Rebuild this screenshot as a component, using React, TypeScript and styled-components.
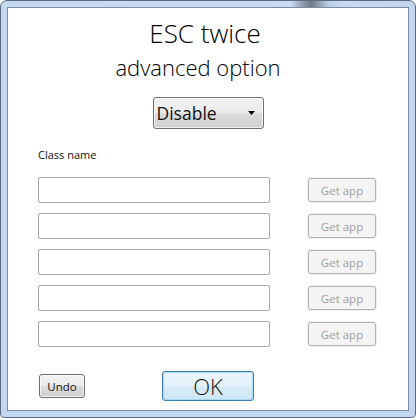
import React from "react";
import styled, { createGlobalStyle } from "styled-components";

const Global = createGlobalStyle`
  html, body { margin: 0; padding: 0; background: #ffffff; }
  body { font-family: "Open Sans", "Noto Sans", sans-serif; }
  * { box-sizing: border-box; }
`;

const Frame = styled.div`
  width: 416px;
  height: 418px;
  border: 1px solid #5a6a7e;
  border-radius: 7px 7px 4px 4px;
  padding: 6px;
  background: linear-gradient(90deg, #c4d8ef 0%, #c9dcf2 70%, #8d99a8 73%, #6f7a88 75%, #b9cbe0 79%, #c6daf1 82%, #c1d6ee 100%) top / 100% 7px no-repeat,
    #c3d8f0;
`;

const Content = styled.div`
  height: 100%;
  border: 1px solid #7d8fa6;
  background: #ffffff;
  display: flex;
  flex-direction: column;
  padding: 0 32px 0 30px;
`;

const Title = styled.div`
  margin-top: 9px;
  padding-right: 4px;
  text-align: center;
  font-size: 26px;
  font-weight: 300;
  line-height: 32px;
  color: #000;
`;

const Subtitle = styled.div`
  margin-top: 3px;
  padding-right: 18px;
  text-align: center;
  font-size: 22px;
  font-weight: 300;
  line-height: 30px;
  color: #000;
`;

const DropWrap = styled.div`
  display: flex;
  justify-content: center;
  padding-left: 2px;
  margin-top: 15px;
`;

const Dropdown = styled.div`
  width: 111px;
  height: 32px;
  border: 1px solid #707070;
  border-radius: 3px;
  background: linear-gradient(#f2f2f2 0%, #ebebeb 48%, #dddddd 52%, #cfcfcf 100%);
  display: flex;
  align-items: center;
  justify-content: space-between;
  padding: 0 7px 0 3px;
  font-size: 17.5px;
  color: #111;
  box-shadow: inset 0 0 0 1px rgba(255, 255, 255, 0.7);
`;

const Label = styled.div`
  margin-top: 18px;
  font-size: 11px;
  line-height: 15px;
  color: #111;
`;

const Rows = styled.div`
  margin-top: 15px;
  display: flex;
  flex-direction: column;
  gap: 10px;
`;

const Row = styled.div`
  display: flex;
  align-items: center;
  justify-content: space-between;
  height: 26px;
`;

const TextInput = styled.input`
  width: 232px;
  height: 26px;
  border: 1px solid #a9a9a9;
  border-radius: 2px;
  background: #fff;
  margin: 0;
  padding: 0 4px;
  outline: none;
`;

const AppButton = styled.button`
  width: 68px;
  height: 24px;
  margin: 1px 0;
  padding: 0;
  border: 1px solid #adb2b5;
  border-radius: 3px;
  background: #f4f4f4;
  color: #a0a0a0;
  font-family: "Open Sans", "Noto Sans", sans-serif;
  font-size: 11.5px;
  box-shadow: 0 0 0 1px #f0f0f0;
`;

const Footer = styled.div`
  margin-top: auto;
  margin-bottom: 9px;
  display: flex;
  align-items: center;
  padding-left: 1px;
`;

const UndoButton = styled.button`
  width: 46px;
  height: 24px;
  margin: 0;
  padding: 0;
  border: 1px solid #707070;
  border-radius: 3px;
  background: linear-gradient(#f2f2f2 0%, #ebebeb 48%, #dddddd 52%, #cfcfcf 100%);
  font-family: "Open Sans", "Noto Sans", sans-serif;
  font-size: 11.5px;
  color: #111;
  box-shadow: inset 0 0 0 1px rgba(255, 255, 255, 0.7);
`;

const OkButton = styled.button`
  width: 92px;
  height: 30px;
  margin: 0 0 0 77px;
  padding: 0;
  border: 1px solid #3c7fb1;
  border-radius: 3px;
  background: linear-gradient(#eaf6fd 0%, #e4f1fa 48%, #d9ecf8 52%, #cde6f5 100%);
  font-family: "Open Sans", "Noto Sans", sans-serif;
  font-size: 22px;
  font-weight: 300;
  line-height: 1;
  color: #111;
  box-shadow: inset 0 0 0 1px #a7d9f5;
`;

const Arrow = () => (
  <svg width="8" height="5" viewBox="0 0 8 5">
    <path d="M0 0 H7 L3.5 4 Z" fill="#000" />
  </svg>
);

export default function App() {
  const rows = [0, 1, 2, 3, 4];
  return (
    <>
      <Global />
      <Frame>
        <Content>
          <Title>ESC twice</Title>
          <Subtitle>advanced option</Subtitle>
          <DropWrap>
            <Dropdown>
              <span>Disable</span>
              <Arrow />
            </Dropdown>
          </DropWrap>
          <Label>Class name</Label>
          <Rows>
            {rows.map((r) => (
              <Row key={r}>
                <TextInput type="text" />
                <AppButton disabled>Get app</AppButton>
              </Row>
            ))}
          </Rows>
          <Footer>
            <UndoButton>Undo</UndoButton>
            <OkButton>OK</OkButton>
          </Footer>
        </Content>
      </Frame>
    </>
  );
}
